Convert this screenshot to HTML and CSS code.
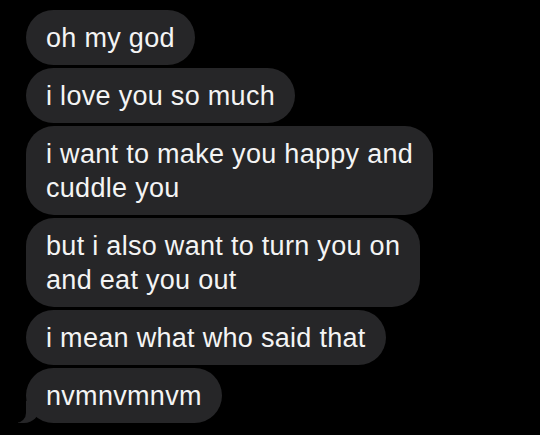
FILE: index.html
```html
<!DOCTYPE html>
<html lang="en">
<head>
  <meta charset="UTF-8">
  <title>Messages</title>
  <link rel="stylesheet" href="styles.css">
</head>
<body>
  <div class="thread">
    <div class="bubble">oh my god</div>
    <div class="bubble">i love you so much</div>
    <div class="bubble">i want to make you happy and<br>cuddle you</div>
    <div class="bubble">but i also want to turn you on<br>and eat you out</div>
    <div class="bubble">i mean what who said that</div>
    <div class="bubble tail">nvmnvmnvm</div>
  </div>
</body>
</html>
```

FILE: styles.css
```css
body {
  margin: 0;
  background: #000;
  font-family: "Liberation Sans", Arial, sans-serif;
}
.thread {
  display: flex;
  flex-direction: column;
  align-items: flex-start;
  gap: 3px;
  padding: 10px 0 0 26px;
}
.bubble {
  position: relative;
  background: #262628;
  color: #f4f4f4;
  font-size: 27px;
  line-height: 34px;
  letter-spacing: 0.3px;
  padding: 11px 20px 10px 20px;
  border-radius: 28px;
  white-space: nowrap;
}
.bubble.tail::before {
  content: "";
  position: absolute;
  bottom: 0;
  left: -8px;
  width: 22px;
  height: 22px;
  background: #262628;
  border-bottom-right-radius: 16px;
  z-index: -1;
}
.bubble.tail::after {
  content: "";
  position: absolute;
  bottom: 0;
  left: -11px;
  width: 11px;
  height: 22px;
  background: #000;
  border-bottom-right-radius: 10px;
}
```
